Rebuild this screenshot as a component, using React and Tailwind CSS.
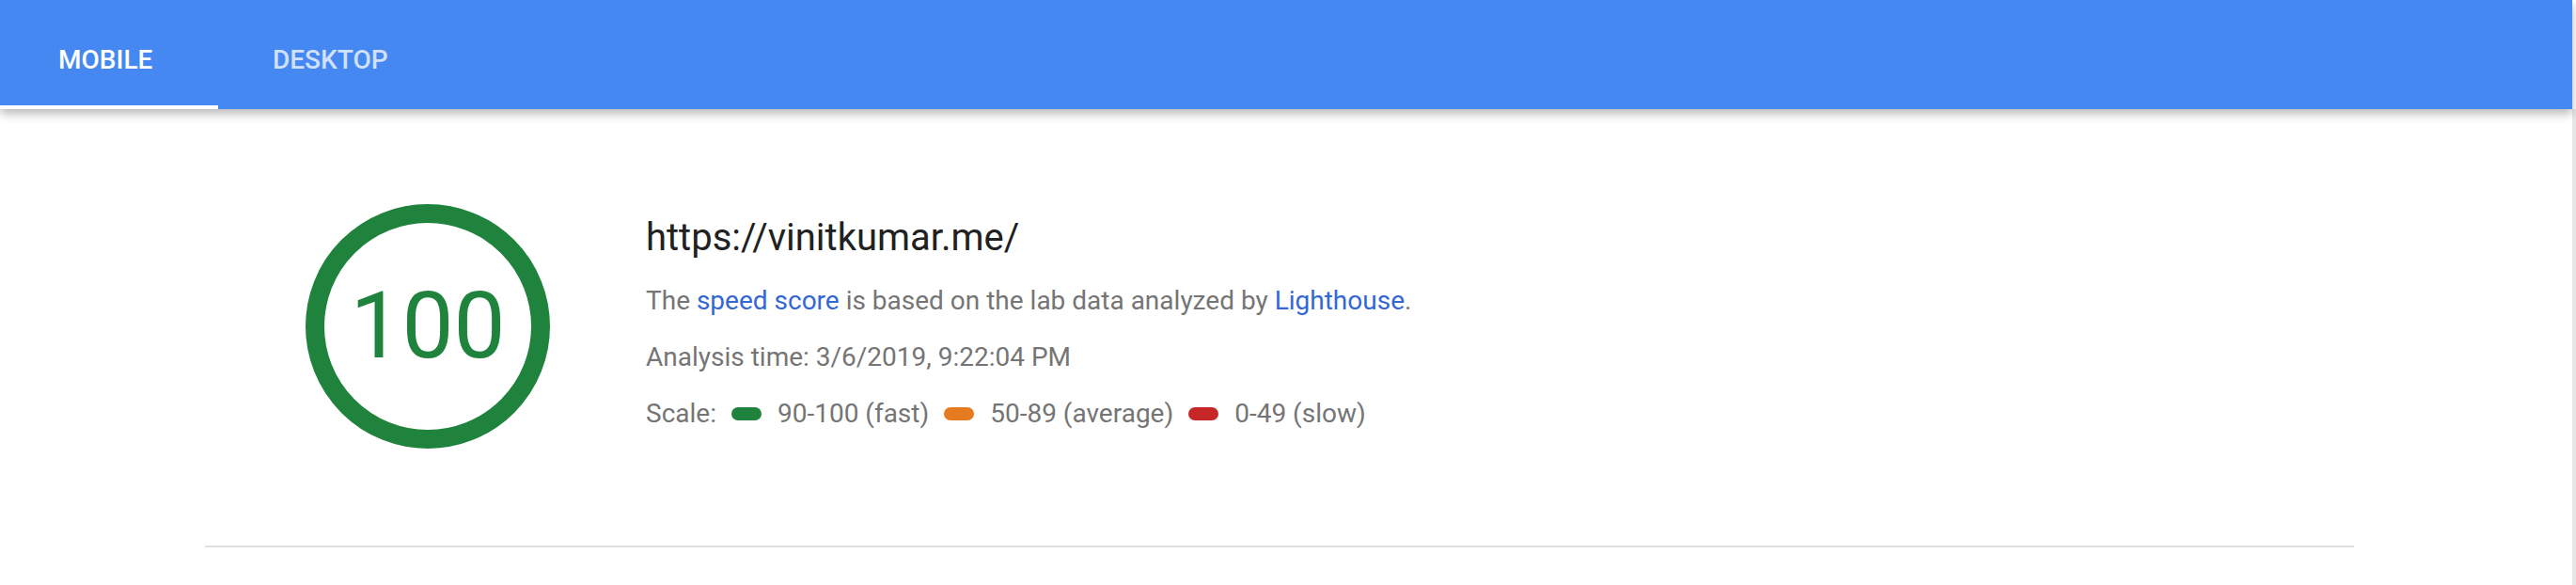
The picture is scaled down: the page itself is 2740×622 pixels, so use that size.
import React from 'react';

const scale = [
  { color: 'bg-[#20833d]', label: '90-100 (fast)' },
  { color: 'bg-[#e67a1f]', label: '50-89 (average)' },
  { color: 'bg-[#c62627]', label: '0-49 (slow)' },
];

const Gauge = ({ score }) => (
  <div className="relative w-[260px] h-[260px] shrink-0">
    <svg className="absolute inset-0" width="260" height="260" viewBox="0 0 260 260">
      <circle cx="130" cy="130" r="120" fill="none" stroke="#20833d" strokeWidth="20" />
    </svg>
    <div className="absolute inset-0 flex items-center justify-center">
      <span className="text-[98px] leading-none text-[#20833d]">{score}</span>
    </div>
  </div>
);

const App = () => {
  return (
    <div className="flex w-full h-[622px] bg-white overflow-hidden font-['Roboto',sans-serif]">
      <div className="flex-1 flex flex-col">
        {/* Tabs */}
        <div className="relative z-10 h-[116px] bg-[#4688f2] flex shadow-[0_5px_10px_rgba(0,0,0,0.28)]">
          <div className="relative w-[232px] h-full flex items-center pt-[11px] pl-[62px] text-[28px] font-medium text-white">
            MOBILE
            <div className="absolute left-0 right-0 bottom-0 h-[4px] bg-white" />
          </div>
          <div className="h-full flex items-center pt-[11px] pl-[58px] text-[28px] font-medium text-white/75">
            DESKTOP
          </div>
        </div>

        {/* Summary */}
        <div className="ml-[218px] w-[2286px]">
          <div className="flex items-start pt-[101px] pb-[103px] pl-[107px]">
            <Gauge score={100} />
            <div className="ml-[102px] mt-[12px]">
              <div className="text-[40px] leading-[48px] text-[#212121] mb-[13px]">
                https://vinitkumar.me/
              </div>
              <div className="text-[28px] leading-[60px] text-[#757575]">
                The <span className="text-[#3367d6]">speed score</span> is based on the lab data analyzed by{' '}
                <span className="text-[#3367d6]">Lighthouse</span>.
              </div>
              <div className="text-[28px] leading-[60px] text-[#757575]">
                Analysis time: 3/6/2019, 9:22:04 PM
              </div>
              <div className="flex items-center text-[28px] leading-[60px] text-[#757575]">
                <span>Scale:</span>
                {scale.map((s) => (
                  <div key={s.label} className="flex items-center">
                    <span className={`ml-[16px] mr-[17px] w-[32px] h-[14px] rounded-full ${s.color}`} />
                    <span>{s.label}</span>
                  </div>
                ))}
              </div>
            </div>
          </div>
          <div className="border-t-2 border-[#e0e0e0]" />
        </div>
      </div>
      <div className="w-[4px] flex flex-col">
        <div className="h-[116px] bg-white" />
        <div className="flex-1 bg-[#e6e6e6]" />
      </div>
    </div>
  );
};

export default App;
